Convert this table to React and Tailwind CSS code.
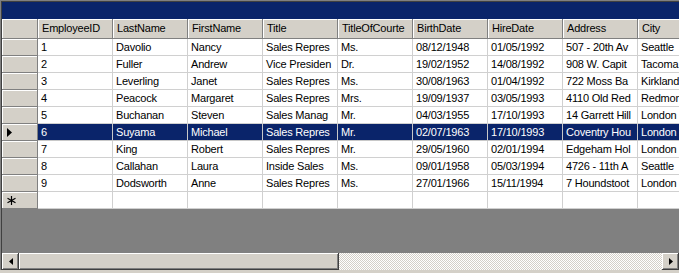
const columns = ['EmployeeID', 'LastName', 'FirstName', 'Title', 'TitleOfCourte', 'BirthDate', 'HireDate', 'Address', 'City'];

const rows = [
  ['1', 'Davolio', 'Nancy', 'Sales Repres', 'Ms.', '08/12/1948', '01/05/1992', '507 - 20th Av', 'Seattle'],
  ['2', 'Fuller', 'Andrew', 'Vice Presiden', 'Dr.', '19/02/1952', '14/08/1992', '908 W. Capit', 'Tacoma'],
  ['3', 'Leverling', 'Janet', 'Sales Repres', 'Ms.', '30/08/1963', '01/04/1992', '722 Moss Ba', 'Kirkland'],
  ['4', 'Peacock', 'Margaret', 'Sales Repres', 'Mrs.', '19/09/1937', '03/05/1993', '4110 Old Red', 'Redmond'],
  ['5', 'Buchanan', 'Steven', 'Sales Manag', 'Mr.', '04/03/1955', '17/10/1993', '14 Garrett Hill', 'London'],
  ['6', 'Suyama', 'Michael', 'Sales Repres', 'Mr.', '02/07/1963', '17/10/1993', 'Coventry Hou', 'London'],
  ['7', 'King', 'Robert', 'Sales Repres', 'Mr.', '29/05/1960', '02/01/1994', 'Edgeham Hol', 'London'],
  ['8', 'Callahan', 'Laura', 'Inside Sales', 'Ms.', '09/01/1958', '05/03/1994', '4726 - 11th A', 'Seattle'],
  ['9', 'Dodsworth', 'Anne', 'Sales Repres', 'Ms.', '27/01/1966', '15/11/1994', '7 Houndstoot', 'London'],
];

const SELECTED = 5;

// classic raised 3D look
const raised = 'shadow-[inset_-1px_-1px_#404040,inset_1px_1px_#ffffff,inset_-2px_-2px_#808080]';

function RowHeader({ children }) {
  return (
    <div className="w-[36px] shrink-0 h-full bg-[#d4d0c8] border-r border-b border-[#808080] shadow-[inset_1px_1px_#ffffff] flex items-center pl-[5px]">
      {children}
    </div>
  );
}

function ScrollButton({ dir }) {
  return (
    <div className={`w-[17px] h-[17px] shrink-0 bg-[#d4d0c8] ${raised} flex items-center justify-center`}>
      <svg width="4" height="7" viewBox="0 0 4 7">
        {dir === 'left' ? <path d="M4 0 L0 3.5 L4 7 Z" fill="#000" /> : <path d="M0 0 L4 3.5 L0 7 Z" fill="#000" />}
      </svg>
    </div>
  );
}

export default function App() {
  return (
    <div className="w-[679px] h-[273px] bg-[#d4d0c8] overflow-hidden font-['Liberation_Sans',Arial,sans-serif] text-[11px] tracking-[-0.2px] text-black">
      <div className="h-[270px] border-t border-l border-[#808080]">
        <div className="h-full border-t border-l border-[#404040] flex flex-col">
          {/* caption bar */}
          <div className="h-[17px] shrink-0 bg-[#0a246a]" />

          {/* grid */}
          <div className="shrink-0 overflow-hidden bg-white">
            <div className="w-max">
              {/* header row */}
              <div className="flex h-[20px]">
                <div className="w-[36px] shrink-0 bg-[#d4d0c8] border-r border-b border-[#808080] shadow-[inset_1px_1px_#ffffff]" />
                {columns.map(c => (
                  <div key={c} className="w-[75px] shrink-0 bg-[#d4d0c8] border-r border-b border-[#808080] shadow-[inset_1px_1px_#ffffff] flex items-center pl-[4px] whitespace-nowrap overflow-hidden">
                    {c}
                  </div>
                ))}
              </div>

              {rows.map((r, i) => {
                const sel = i === SELECTED;
                return (
                  <div key={r[0]} className="flex h-[17px]">
                    <RowHeader>
                      {sel && (
                        <svg width="5" height="9" viewBox="0 0 5 9">
                          <path d="M0 0 L5 4.5 L0 9 Z" fill="#000" />
                        </svg>
                      )}
                    </RowHeader>
                    {r.map((v, j) => (
                      <div
                        key={j}
                        className={`w-[75px] shrink-0 border-r border-b flex items-center pl-[3px] whitespace-nowrap overflow-hidden ${sel ? 'bg-[#0a246a] text-white border-[#c8c8c8]' : 'bg-white border-[#d0d0d0]'}`}
                      >
                        {v}
                      </div>
                    ))}
                  </div>
                );
              })}

              {/* new row */}
              <div className="flex h-[17px]">
                <RowHeader>
                  <svg width="9" height="9" viewBox="0 0 9 9" stroke="#000" strokeWidth="1.2">
                    <path d="M4.5 0 V9 M0.5 2.2 L8.5 6.8 M0.5 6.8 L8.5 2.2" />
                  </svg>
                </RowHeader>
                {columns.map(c => (
                  <div key={c} className="w-[75px] shrink-0 bg-white border-r border-b border-[#d0d0d0]" />
                ))}
              </div>
            </div>
          </div>

          {/* empty area */}
          <div className="flex-1 bg-[#808080]" />

          {/* horizontal scrollbar */}
          <div className="h-[17px] shrink-0 flex bg-[repeating-conic-gradient(#d4d0c8_0%_25%,#ffffff_0%_50%)] bg-[length:2px_2px]">
            <ScrollButton dir="left" />
            <div className={`w-[320px] h-full bg-[#d4d0c8] ${raised}`} />
            <div className="flex-1" />
            <ScrollButton dir="right" />
          </div>
        </div>
      </div>
    </div>
  );
}
